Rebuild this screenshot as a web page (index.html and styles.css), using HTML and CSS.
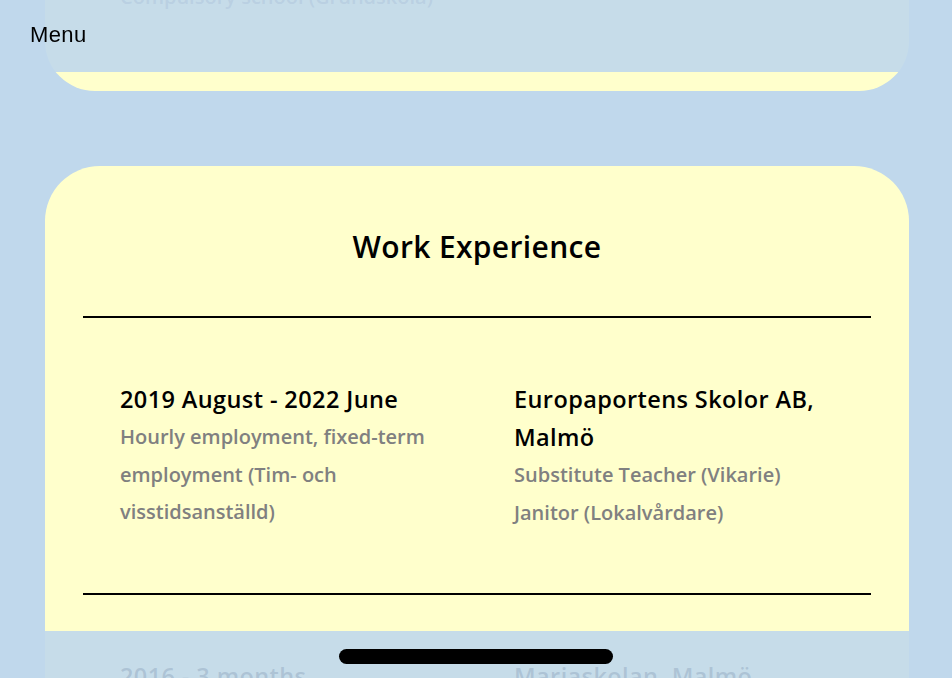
FILE: index.html
```html
<!DOCTYPE html>
<html lang="en">
<head>
<meta charset="utf-8">
<title>CV</title>
<link rel="stylesheet" href="styles.css">
</head>
<body>
<header class="topbar"><span class="menu">Menu</span></header>
<main class="page">
  <section class="card card-prev">
    <p class="sub prev-line">Compulsory school (Grundskola)</p>
  </section>
  <section class="card">
    <h2 class="title">Work Experience</h2>
    <hr class="rule">
    <div class="row">
      <div class="col">
        <h3 class="head">2019 August - 2022 June</h3>
        <p class="sub">Hourly employment, fixed-term employment (Tim- och visstidsanställd)</p>
      </div>
      <div class="col">
        <h3 class="head">Europaportens Skolor AB, Malmö</h3>
        <p class="sub">Substitute Teacher (Vikarie)</p>
        <p class="sub">Janitor (Lokalvårdare)</p>
      </div>
    </div>
    <hr class="rule">
    <div class="row">
      <div class="col">
        <h3 class="head">2016 - 3 months</h3>
        <p class="sub">Internship (Praktik)</p>
      </div>
      <div class="col">
        <h3 class="head">Mariaskolan, Malmö</h3>
        <p class="sub">Assistant</p>
      </div>
    </div>
  </section>
</main>
<footer class="bottombar"><span class="pill"></span></footer>
</body>
</html>
```
FILE: styles.css
```css
html, body {
  margin: 0;
  padding: 0;
}
body {
  background: #c0d8ec;
  font-family: "Open Sans", "Noto Sans", sans-serif;
  height: 678px;
  overflow: hidden;
}
.topbar {
  position: fixed;
  top: 0;
  left: 0;
  right: 0;
  height: 72px;
  background: rgba(192, 216, 236, 0.9);
  display: flex;
  align-items: center;
  padding-left: 30px;
  box-sizing: border-box;
  z-index: 5;
}
.menu {
  font-family: "Liberation Sans", Arial, sans-serif;
  font-size: 22px;
  color: #000;
  line-height: 1;
  margin-top: -2px;
  letter-spacing: 0.4px;
}
.bottombar {
  position: fixed;
  left: 0;
  right: 0;
  bottom: 0;
  height: 47px;
  background: rgba(192, 216, 236, 0.9);
  display: flex;
  justify-content: center;
  align-items: flex-start;
  padding-top: 18px;
  box-sizing: border-box;
  z-index: 5;
}
.pill {
  display: block;
  width: 274px;
  height: 15px;
  border-radius: 8px;
  background: #000;
}
.page {
  display: flex;
  flex-direction: column;
  gap: 75px;
  padding: 0 43px 0 45px;
}
.card {
  background: #ffffcc;
  border-radius: 55px;
  padding: 59px 38px 0;
}
.card-prev {
  height: 91px;
  box-sizing: border-box;
  padding: 0 75px;
  border-radius: 0 0 50px 50px;
  overflow: hidden;
}
.title {
  margin: 0 0 47px;
  text-align: center;
  font-size: 30px;
  line-height: 44px;
  font-weight: 600;
  letter-spacing: 0.35px;
  color: #000;
}
.rule {
  border: none;
  height: 2px;
  background: #000;
  margin: 0;
}
.row {
  display: grid;
  grid-template-columns: 1fr 1fr;
  padding: 62px 0;
}
.col {
  padding: 0 37px;
}
.head {
  margin: 0;
  font-size: 23.5px;
  line-height: 38px;
  font-weight: 600;
  letter-spacing: 0.4px;
  color: #000;
}
.sub {
  margin: 0;
  font-size: 20px;
  line-height: 37.5px;
  font-weight: 600;
  color: #808080;
}
.card-prev .prev-line {
  margin-top: -22px;
}
```
